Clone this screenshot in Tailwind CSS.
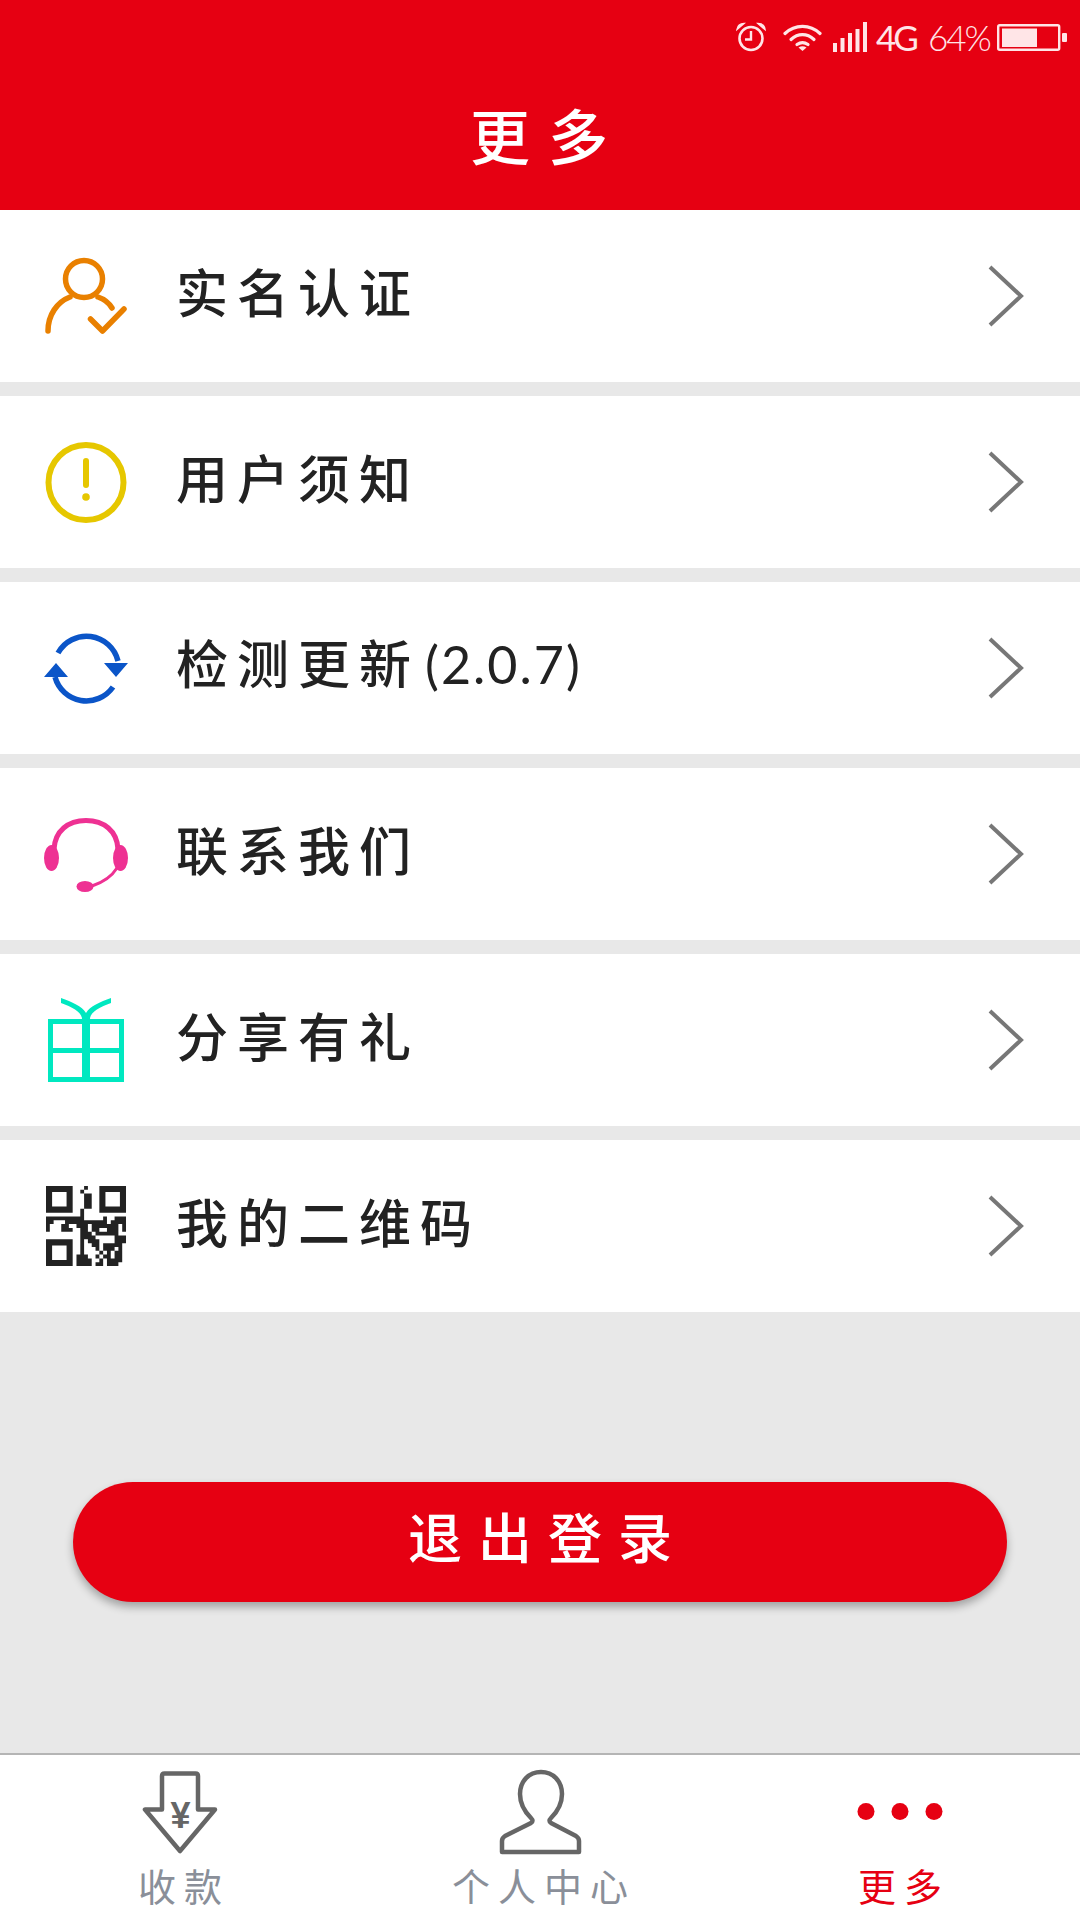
<!DOCTYPE html>
<html lang="zh-CN">
<head>
  <meta charset="UTF-8">
  <meta name="viewport" content="width=device-width, initial-scale=1.0">
  <script src="https://cdn.jsdelivr.net/npm/@tailwindcss/browser@4"></script>
  <title>更多</title>
</head>
<body class="bg-[#e8e8e8] font-['Noto_Sans_CJK_SC',sans-serif]">
  <div class="w-[1080px] h-[1920px] flex flex-col overflow-hidden">

    <!-- Header -->
    <header class="bg-[#e60012] h-[210px] shrink-0">
      <div class="h-[60px] flex justify-end items-start pt-[22px] pr-[13px] text-[#ffe5e7]">
        <svg class="w-[30px] h-[30px]" viewBox="0 0 30 30" fill="none" stroke="currentColor">
          <circle cx="15" cy="16.5" r="11.5" stroke-width="2.6"/>
          <path d="M15 9v8.5H9" stroke-width="2.4"/>
          <path d="M1 7.5Q2 1.5 8 1.5L1 7.5ZM29 7.5Q28 1.5 22 1.5L29 7.5Z" fill="currentColor" stroke-width="1.5"/>
        </svg>
        <svg class="w-[39px] h-[28px] ml-[17px] mt-[1px]" viewBox="0 0 39 28" fill="none" stroke="currentColor" stroke-width="3.2" stroke-linecap="round">
          <path d="M2 10.5C12 1 27 1 37 10.5"/>
          <path d="M8 16.5C15 10 24 10 31 16.5"/>
          <path d="M14 21.5C17.500 19 21.500 19 25 21.500"/>
          <path d="M19.500 28L15.500 24.500Q19.500 22 23.500 24.500Z" fill="currentColor" stroke="none"/>
        </svg>
        <svg class="w-[34px] h-[30px] ml-[11px]" viewBox="0 0 34 30" fill="currentColor">
          <rect x="0" y="21" width="4" height="9"/>
          <rect x="7.500" y="16" width="4" height="14"/>
          <rect x="15" y="11" width="4" height="19"/>
          <rect x="22.500" y="7" width="4" height="23"/>
          <rect x="30" y="0" width="4" height="30"/>
        </svg>
        <span class="w-[40px] ml-[9px] -mt-[5px] text-[35px] leading-[40px] tracking-[-3px] font-['Lato'] whitespace-nowrap">4G</span>
        <span class="w-[62px] ml-[12px] -mt-[5px] text-[35px] leading-[40px] tracking-[-2px] font-['Lato'] font-light whitespace-nowrap">64%</span>
        <svg class="w-[70px] h-[27px] ml-[7px] mt-[2px]" viewBox="0 0 70 27" fill="currentColor">
          <rect x="1.200" y="1.200" width="61" height="24.500" rx="1.500" fill="none" stroke="currentColor" stroke-width="2.400"/>
          <rect x="5" y="4.500" width="35" height="18.500"/>
          <rect x="65" y="9" width="5" height="9" rx="1"/>
        </svg>
      </div>
      <h1 class="h-[150px] flex items-center justify-center pl-[16px] pb-[2px] text-white text-[60px] font-medium tracking-[18px]">更多</h1>
    </header>

    <!-- Menu rows -->
    <main class="flex flex-col gap-[14px] shrink-0">
      <div class="h-[172px] bg-white flex items-center pl-[40px] pr-[55px]">
        <svg class="w-[90px] h-[90px] shrink-0" viewBox="0 0 90 90" fill="none" stroke="#e98000" stroke-width="5.500" stroke-linecap="round" stroke-linejoin="round">
          <circle cx="44" cy="28" r="18.500"/>
          <path d="M8 80C8 64 17 51 30 46M58 46C64 48 69 52 72 57"/>
          <path d="M50.500 68L62.500 80L84 58"/>
        </svg>
        <span class="ml-[46px] mb-[10px] text-[52px] leading-none font-medium tracking-[9px] text-[#222]">实名认证</span>
        <svg class="w-[40px] h-[66px] ml-auto" viewBox="0 0 40 66" fill="none" stroke="#777" stroke-width="4"><path d="M5 4L36 33L5 62"/></svg>
      </div>

      <div class="h-[172px] bg-white flex items-center pl-[40px] pr-[55px]">
        <svg class="w-[90px] h-[90px] shrink-0" viewBox="0 0 90 90" fill="none" stroke="#e6c700" stroke-linecap="round">
          <circle cx="46" cy="45.500" r="37.500" stroke-width="6"/>
          <path d="M46 24V48" stroke-width="6"/>
          <circle cx="46" cy="60" r="3.800" fill="#e6c700" stroke="none"/>
        </svg>
        <span class="ml-[46px] mb-[10px] text-[52px] leading-none font-medium tracking-[9px] text-[#222]">用户须知</span>
        <svg class="w-[40px] h-[66px] ml-auto" viewBox="0 0 40 66" fill="none" stroke="#777" stroke-width="4"><path d="M5 4L36 33L5 62"/></svg>
      </div>

      <div class="h-[172px] bg-white flex items-center pl-[40px] pr-[55px]">
        <svg class="w-[90px] h-[90px] shrink-0" viewBox="0 0 90 90" fill="none" stroke="#0b55c8" stroke-width="5.500">
          <path d="M18 30A32.500 32.500 0 0 1 78 38"/>
          <path d="M15 54A32.500 32.500 0 0 0 73 64"/>
          <path d="M4 54H28L16 40ZM64 40H88L76 54Z" fill="#0b55c8" stroke="none"/>
        </svg>
        <span class="ml-[46px] mb-[10px] text-[52px] leading-none font-medium text-[#222] whitespace-nowrap"><span class="tracking-[9px]">检测更新</span><span class="font-['Lato'] font-normal tracking-[2px] ml-[5px]">(2.0.7)</span></span>
        <svg class="w-[40px] h-[66px] ml-auto" viewBox="0 0 40 66" fill="none" stroke="#777" stroke-width="4"><path d="M5 4L36 33L5 62"/></svg>
      </div>

      <div class="h-[172px] bg-white flex items-center pl-[40px] pr-[55px]">
        <svg class="w-[90px] h-[90px] shrink-0" viewBox="0 0 90 90" fill="#ee3193">
          <path d="M14 40C15 22 28 11.500 46 11.500C64 11.500 77 22 78 40" fill="none" stroke="#ee3193" stroke-width="5"/>
          <ellipse cx="11.500" cy="49" rx="7.500" ry="13"/>
          <ellipse cx="80.500" cy="49" rx="7.500" ry="13"/>
          <path d="M77 59C72 67 64 73 52 77" fill="none" stroke="#ee3193" stroke-width="3"/>
          <ellipse cx="45" cy="77.500" rx="8.500" ry="5.500"/>
        </svg>
        <span class="ml-[46px] mb-[10px] text-[52px] leading-none font-medium tracking-[9px] text-[#222]">联系我们</span>
        <svg class="w-[40px] h-[66px] ml-auto" viewBox="0 0 40 66" fill="none" stroke="#777" stroke-width="4"><path d="M5 4L36 33L5 62"/></svg>
      </div>

      <div class="h-[172px] bg-white flex items-center pl-[40px] pr-[55px]">
        <svg class="w-[90px] h-[90px] shrink-0" viewBox="0 0 90 90" fill="#00e8c0">
          <path fill-rule="evenodd" d="M8 24H84V87H8ZM13 29V53H42V29ZM50 29V53H79V29ZM13 58V82H42V58ZM50 58V82H79V58Z"/>
          <path d="M21 3C32 7 42 11 46 18C50 11 60 7 71 3V8C60 12 50 17 50 24H42C42 17 32 12 21 8Z"/>
        </svg>
        <span class="ml-[46px] mb-[10px] text-[52px] leading-none font-medium tracking-[9px] text-[#222]">分享有礼</span>
        <svg class="w-[40px] h-[66px] ml-auto" viewBox="0 0 40 66" fill="none" stroke="#777" stroke-width="4"><path d="M5 4L36 33L5 62"/></svg>
      </div>

      <div class="h-[172px] bg-white flex items-center pl-[40px] pr-[55px]">
        <svg class="w-[90px] h-[90px] shrink-0" viewBox="0 0 90 90" fill="#222">
          <g transform="translate(6 5) scale(3.81)">
            <path fill-rule="evenodd" d="M0 0h7v7h-7zM1.600 1.600v3.800h3.800v-3.800zM14 0h7v7h-7zM15.600 1.600v3.800h3.800v-3.800zM0 14h7v7h-7zM1.600 15.600v3.800h3.800v-3.800z"/>
            <path d="M10 0h1v1h-1zM9 1h1v1h-1zM10 2h2v4h-2zM9 6h1v2h-1zM0 8h10v1h-10zM15 8h1v1h-1zM18 8h3v1h-3zM0 9h2v1h-2zM5 9h11v1h-11zM17 9h4v1h-4zM0 10h1v1h-1zM4 10h2v1h-2zM8 10h3v1h-3zM12 10h7v1h-7zM20 10h1v2h-1zM0 11h1v1h-1zM4 11h3v1h-3zM9 11h2v1h-2zM12 11h2v1h-2zM16 11h3v1h-3zM9 12h3v1h-3zM13 12h6v1h-6zM9 13h4v1h-4zM18 13h3v1h-3zM9 14h1v1h-1zM11 14h3v1h-3zM18 14h3v1h-3zM9 15h1v1h-1zM12 15h2v1h-2zM15 15h5v1h-5zM9 16h1v1h-1zM13 16h1v1h-1zM15 16h3v1h-3zM19 16h1v1h-1zM9 17h1v1h-1zM14 17h1v1h-1zM16 17h1v1h-1zM18 17h2v1h-2zM8 18h3v1h-3zM13 18h1v1h-1zM15 18h2v1h-2zM18 18h2v1h-2zM8 19h4v1h-4zM14 19h1v1h-1zM16 19h4v1h-4zM8 20h4v1h-4zM13 20h2v1h-2zM16 20h3v1h-3z"/>
          </g>
        </svg>
        <span class="ml-[46px] mb-[10px] text-[52px] leading-none font-medium tracking-[9px] text-[#222]">我的二维码</span>
        <svg class="w-[40px] h-[66px] ml-auto" viewBox="0 0 40 66" fill="none" stroke="#777" stroke-width="4"><path d="M5 4L36 33L5 62"/></svg>
      </div>
    </main>

    <!-- Logout -->
    <button class="mt-[170px] mx-[73px] h-[120px] shrink-0 rounded-full bg-[#e60012] text-white text-[54px] font-medium tracking-[16px] pl-[16px] pb-[14px] shadow-[0_5px_8px_rgba(0,0,0,0.3)]">退出登录</button>

    <!-- Tab bar -->
    <nav class="mt-auto h-[167px] shrink-0 bg-white border-t-2 border-[#b5b5b5] grid grid-cols-3 pt-[12px] text-[#8a8f99]">
      <div class="flex flex-col items-center">
        <svg class="w-[90px] h-[90px]" viewBox="0 0 90 90" fill="none" stroke="#666" stroke-width="4.500" stroke-linejoin="round">
          <path d="M27 9Q27 6.500 29.500 6.500H60.500Q63 6.500 63 9V42.500H80L45 84L10 42.500H27Z"/>
          <text x="45.500" y="61" text-anchor="middle" fill="#666" stroke="none" font-size="36" font-weight="700" class="font-['Liberation_Sans']">¥</text>
        </svg>
        <span class="mt-[9px] text-[38px] leading-none tracking-[8px] pl-[8px]">收款</span>
      </div>
      <div class="flex flex-col items-center">
        <svg class="w-[90px] h-[90px]" viewBox="0 0 90 90" fill="none" stroke="#666" stroke-width="4.500" stroke-linejoin="round">
          <path d="M46 5C34 5 25 14 25 27C25 37 30 45 36 51Q39 54 36 56L10 69Q7 71 7 74V85H84V74Q84 71 81 69L56 56Q53 54 56 51C62 45 67 37 67 27C67 14 58 5 46 5Z"/>
        </svg>
        <span class="mt-[9px] text-[38px] leading-none tracking-[8px] pl-[8px]">个人中心</span>
      </div>
      <div class="flex flex-col items-center text-[#e60012]">
        <svg class="w-[90px] h-[90px]" viewBox="0 0 90 90" fill="#e60012">
          <circle cx="11" cy="44.500" r="8.500"/>
          <circle cx="45" cy="44.500" r="8.500"/>
          <circle cx="79" cy="44.500" r="8.500"/>
        </svg>
        <span class="mt-[9px] text-[38px] leading-none tracking-[8px] pl-[8px]">更多</span>
      </div>
    </nav>
  </div>
</body>
</html>
